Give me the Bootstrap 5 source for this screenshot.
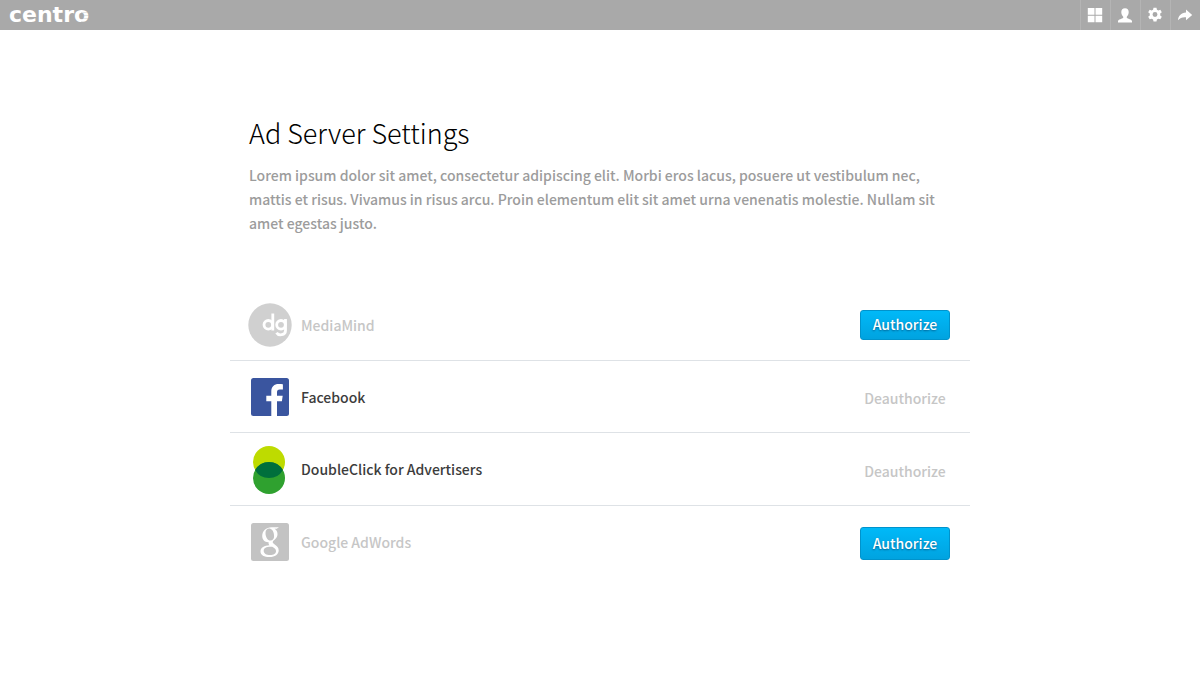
<!DOCTYPE html>
<html lang="en">
<head>
<meta charset="utf-8">
<meta name="viewport" content="width=device-width, initial-scale=1">
<title>Ad Server Settings</title>
<link rel="stylesheet" href="https://cdn.jsdelivr.net/npm/bootstrap@5.3.0/dist/css/bootstrap.min.css">
<style>
  body { font-family: "Noto Sans CJK JP", "Open Sans", sans-serif; font-size: 14px; line-height: 24px; font-weight: 500; color: #3c3c3c; background: #fff; }
  .topbar { height: 30px; background: #a9a9a9; }
  .brand { font: bold 22px/30px "DejaVu Sans", sans-serif; color: #fff; margin-left: 9px; }
  .brand-lines { right: 0; top: 10px; width: 8px; height: 12px; background: repeating-linear-gradient(transparent 0 2px, rgba(169,169,169,.3) 2px 3px); }
  .tool { width: 30px; height: 30px; box-shadow: inset 1px 0 #b4b4b4; color: #fff; }
  .settings { max-width: 740px; padding-top: 82px; }
  .settings h1 { font-size: 27px; line-height: 42px; font-weight: 300; color: #000; margin-bottom: 9px; }
  .lead-in { padding: 0 12px 0 19px; margin-bottom: 54px; }
  .intro { color: #9c9c9c; }
  .server { min-height: 72px; padding: 11px 20px; border-color: #d9d9d9; }
  .server-icon { width: 44px; margin-left: -2px; margin-right: 9px; }
  .is-off { color: #c6c6c6; }
  .btn-act { width: 90px; height: 30px; padding: 0 0 2px; font-size: 14px; line-height: 24px; font-weight: 500; border-radius: 3px; }
  .btn-auth { color: #fff; border: 1px solid #0093cc; background: linear-gradient(#00b9f8, #00a3e0); text-shadow: 0 1px 2px rgba(0,50,90,.6); }
  .btn-auth:hover { color: #fff; background: #00a3e0; }
  .btn-tall { height: 33px; margin-top: 3px; }
  .btn-deauth { color: #c6c6c6; border: 0; margin-top: 5px; }
</style>
</head>
<body>
<header class="topbar d-flex justify-content-between align-items-center">
  <a href="#" class="brand position-relative text-decoration-none">centro<span class="brand-lines position-absolute"></span></a>
  <nav class="d-flex" aria-label="Tools">
    <a href="#" class="tool d-flex align-items-center justify-content-center" aria-label="Dashboard"><svg width="16" height="16" fill="currentColor"><path d="M.8 1h6.700v6.700H.8zM8.500 1h6.700v6.700H8.500zM.8 8.700h6.700v6.500H.8zM8.500 8.700h6.700v6.500H8.500z"/></svg></a>
    <a href="#" class="tool d-flex align-items-center justify-content-center" aria-label="Account"><svg width="16" height="16" fill="currentColor"><path d="M8 1.200c2.400 0 3.700 1.500 3.700 3.800 0 2-.8 3.700-1.900 4.700v1.200c1.500.9 4.800 1.300 5.200 3.200v1.300H1v-1.300c.4-1.900 3.700-2.300 5.200-3.200V9.700C5.100 8.700 4.300 7 4.300 5 4.300 2.700 5.600 1.200 8 1.200z"/></svg></a>
    <a href="#" class="tool d-flex align-items-center justify-content-center" aria-label="Settings"><svg width="16" height="16" viewBox="0.500 0.400 15 15" fill="currentColor"><path fill-rule="evenodd" d="M6.600 1h2.800l.4 1.900 1.300.7 1.900-.7 1.400 2.400-1.500 1.300v1.700l1.500 1.300-1.400 2.400-1.900-.6-1.300.7-.4 1.900H6.600l-.4-1.900-1.300-.7-1.900.6-1.400-2.400 1.500-1.300V6.600L1.600 5.300 3 2.900l1.900.7 1.300-.7zM8 5.200a2.300 2.300 0 1 0 0 4.600 2.300 2.300 0 0 0 0-4.600z"/></svg></a>
    <a href="#" class="tool d-flex align-items-center justify-content-center" aria-label="Sign out"><svg width="16" height="16" fill="currentColor"><path d="M9 2.500l6.200 5.500L9 13.200V10.200C5.500 9.900 3 10.800 1 13.300 1.300 9 4 5.900 9 5.500z"/></svg></a>
  </nav>
</header>

<main class="settings mx-auto">
  <div class="lead-in">
    <h1>Ad Server Settings</h1>
    <p class="intro mb-0">Lorem ipsum dolor sit amet, consectetur adipiscing elit. Morbi eros lacus, posuere ut vestibulum nec, mattis et risus. Vivamus in risus arcu. Proin elementum elit sit amet urna venenatis molestie. Nullam sit amet egestas justo.</p>
  </div>
  <ul class="list-unstyled mb-0">
    <li class="server d-flex align-items-center border-bottom">
      <span class="server-icon d-flex justify-content-center"><svg width="44" height="44"><circle cx="22" cy="22" r="21.700" fill="#d0d0d0"/><g fill="none" stroke="#fff" stroke-width="2.800"><circle cx="20.300" cy="21.800" r="4.300"/><path d="M24.800 10.500V27.500"/><circle cx="33" cy="21.800" r="4.300"/><path d="M37.500 16V27.500c0 5-7 5.500-9 2.200"/></g></svg></span>
      <span class="flex-grow-1 is-off">MediaMind</span>
      <button type="button" class="btn btn-act btn-auth">Authorize</button>
    </li>
    <li class="server d-flex align-items-center border-bottom">
      <span class="server-icon d-flex justify-content-center"><svg width="38" height="38"><rect width="38" height="38" rx="2.500" fill="#3a559f"/><path fill="#fff" d="M20.300 38V23.300h-5v-5.500h5v-4.300c0-4.900 3-7.500 7.300-7.500 2 0 3.800.1 4.300.2v5.200h-3c-2.300 0-2.900 1.200-2.900 2.800v3.600h5.700l-.8 5.500H26V38z"/></svg></span>
      <span class="flex-grow-1">Facebook</span>
      <button type="button" class="btn btn-act btn-deauth">Deauthorize</button>
    </li>
    <li class="server d-flex align-items-center border-bottom">
      <span class="server-icon d-flex justify-content-center"><svg width="34" height="50"><circle cx="16" cy="18" r="16" fill="#bedb00"/><circle cx="16" cy="34" r="16" fill="#2fa12f"/><path d="M2.100 26a16 16 0 0 1 27.800 0 16 16 0 0 1-27.800 0z" fill="#006f3c"/></svg></span>
      <span class="flex-grow-1">DoubleClick for Advertisers</span>
      <button type="button" class="btn btn-act btn-deauth">Deauthorize</button>
    </li>
    <li class="server d-flex align-items-center">
      <span class="server-icon d-flex justify-content-center"><svg width="38" height="38"><rect width="38" height="38" rx="2.500" fill="#c3c3c3"/><path fill="#fff" fill-rule="evenodd" d="M28 4.300l-2.300 1.500h-2.200c2 1.300 3 3 3 5.400 0 2.800-1.400 4.200-3.200 5.700-1 .8-1.600 1.400-1.600 2.200 0 .9.800 1.600 2 2.400 2.300 1.600 4 3.200 4 6 0 3.800-3.700 6.500-9.200 6.500-5.300 0-9-2-9-5.600 0-3.700 4-5.900 9-6.100-.9-.9-1.200-1.800-.8-3-3.800.3-6.500-2.400-6.500-6.200 0-5 3.900-8.800 9.300-8.800zM18.300 5.500c-2.300 0-3.800 1.700-3.800 4.400 0 3.900 2 7.600 5 7.600 2.300 0 3.600-1.700 3.600-4.300 0-4-1.900-7.700-4.800-7.700zM19.500 23.800c-4.100 0-6.800 1.500-6.800 3.900 0 2.700 2.500 4.300 6.400 4.300 3.600 0 5.900-1.400 5.900-3.800 0-1.900-1.300-2.900-3.800-4.400z"/></svg></span>
      <span class="flex-grow-1 is-off">Google AdWords</span>
      <button type="button" class="btn btn-act btn-auth btn-tall">Authorize</button>
    </li>
  </ul>
</main>
<script src="https://cdn.jsdelivr.net/npm/bootstrap@5.3.0/dist/js/bootstrap.bundle.min.js"></script>
</body>
</html>
